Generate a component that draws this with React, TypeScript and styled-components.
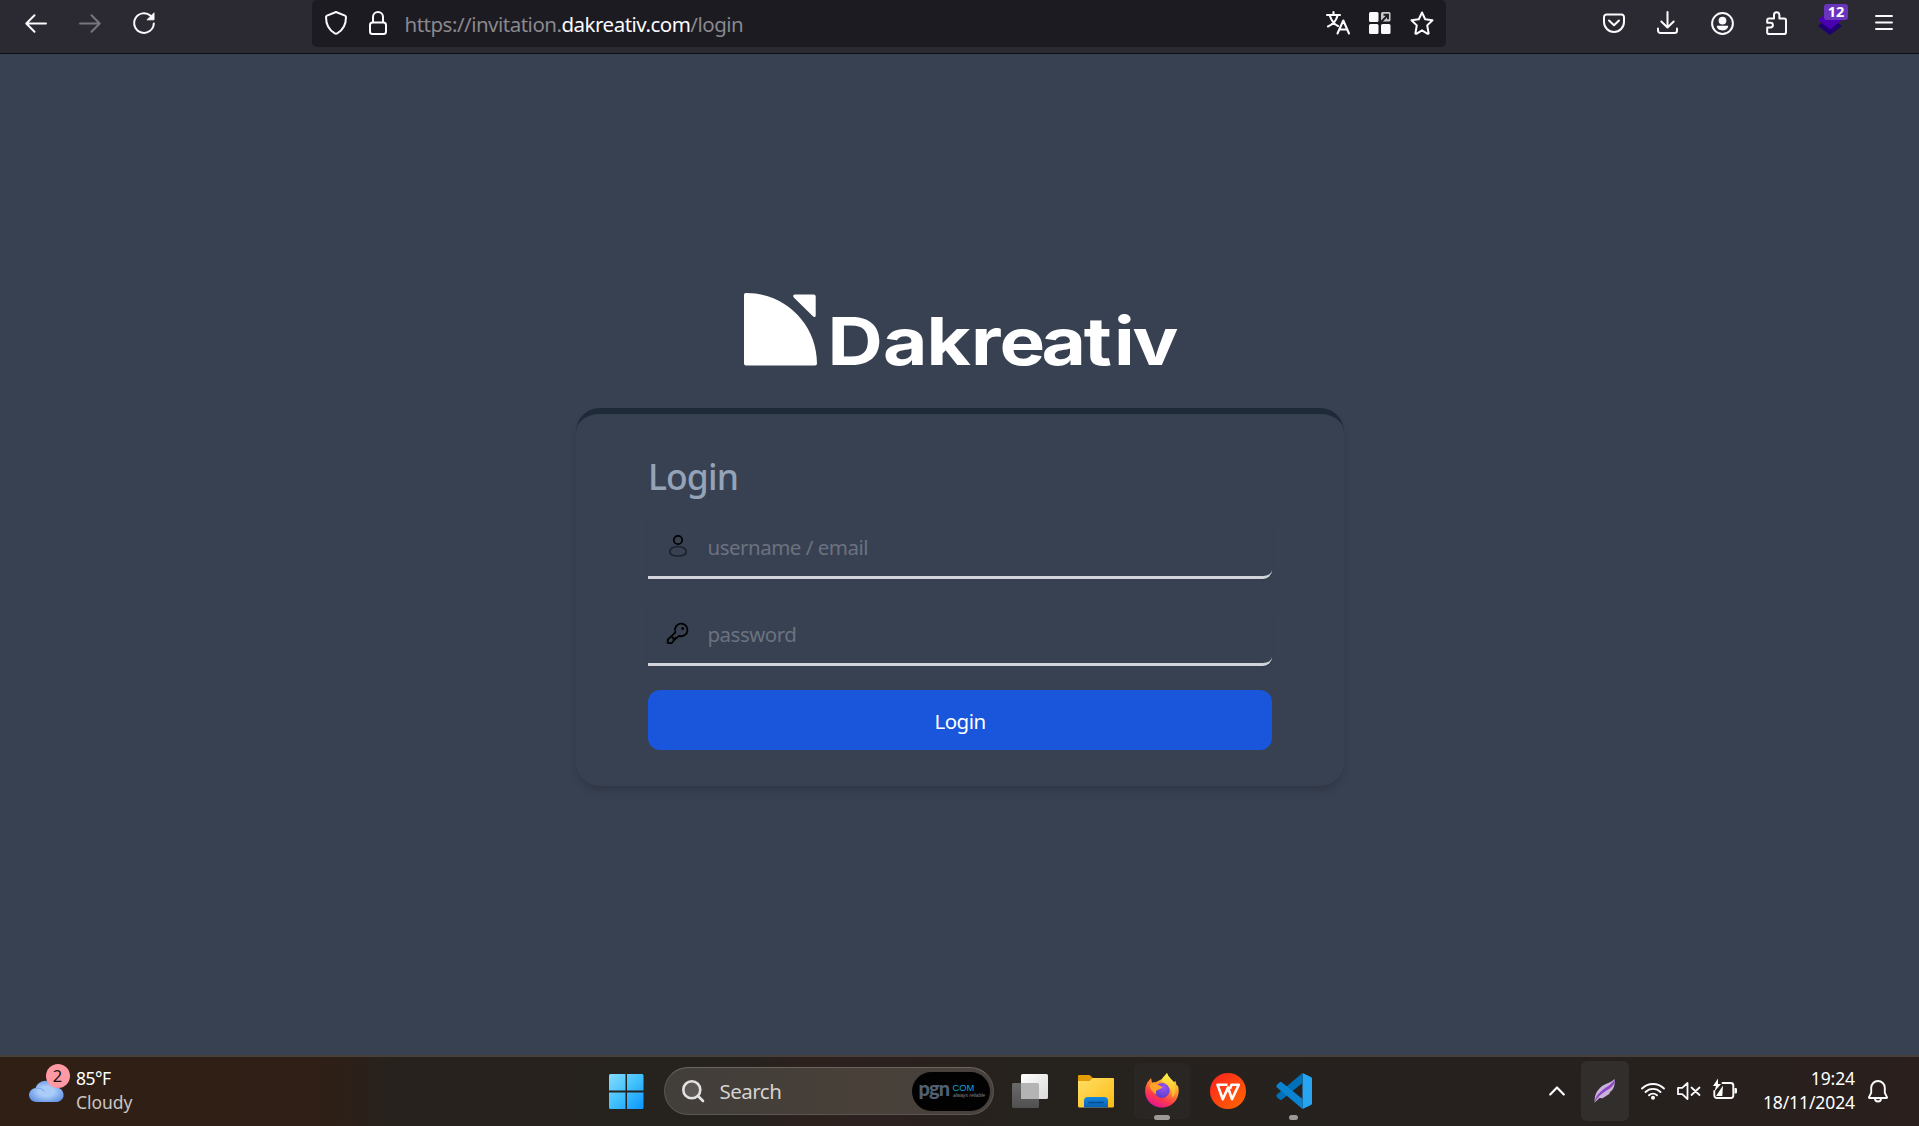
import React from "react";
import styled, { createGlobalStyle } from "styled-components";

const GlobalStyle = createGlobalStyle`
  *, *::before, *::after { box-sizing: border-box; }
  body { margin: 0; background: #374151; overflow: hidden; }
  svg { display: block; flex: none; overflow: visible; }
`;

const sans = `"Noto Sans", "Open Sans", sans-serif`;

const Screen = styled.div`
  width: 1919px;
  height: 1126px;
  display: flex;
  flex-direction: column;
  background: #384152;
  font-family: ${sans};
`;

/* ---------- browser toolbar ---------- */

const Toolbar = styled.header`
  height: 54px;
  flex: none;
  display: flex;
  align-items: flex-start;
  background: #2b2a33;
  border-bottom: 1px solid #0e0d12;
`;

const Slot = styled.span<{ $gap: number; $top?: number }>`
  display: block;
  flex: none;
  margin-left: ${(p) => p.$gap}px;
  margin-top: ${(p) => p.$top ?? 0}px;
`;

const AddressBar = styled.div`
  width: 1134px;
  height: 47px;
  margin-left: 157px;
  flex: none;
  display: flex;
  align-items: flex-start;
  background: #1c1b22;
  border-radius: 5px;
`;

const Url = styled.div`
  width: 938.5px;
  flex: none;
  padding-left: 17.5px;
  line-height: 49px;
  font-size: 20.5px;
  letter-spacing: -0.5px;
  white-space: nowrap;
  color: #89888d;
`;

const Domain = styled.span`
  color: #fbfbfe;
`;

const Extension = styled.div`
  position: relative;
  margin: 13px 0 0 31px;
  width: 24px;
  height: 22px;
  flex: none;
`;

const ExtensionBadge = styled.span`
  position: absolute;
  left: 6px;
  top: -9px;
  width: 24px;
  height: 16px;
  border-radius: 3px;
  background: #6a35bd;
  color: #fff;
  font: 700 14.5px/15px ${sans};
  text-align: center;
`;

/* ---------- login page ---------- */

const Page = styled.main`
  flex: 1;
  display: flex;
  flex-direction: column;
  align-items: center;
  padding-top: 238px;
`;

const Brand = styled.div`
  width: 436px;
  height: 116px;
`;

const Card = styled.form`
  width: 768px;
  height: 378px;
  padding: 42px 72px 0;
  border-top: 6px solid #1f2a39;
  border-radius: 24px;
  box-shadow: 0 6px 9px -1px rgba(0, 0, 0, 0.1), 0 3px 6px -1px rgba(0, 0, 0, 0.06);
`;

const Title = styled.h1`
  margin: 0;
  height: 60px;
  padding-left: 0.5px;
  line-height: 40px;
  font-size: 35.5px;
  font-weight: 550;
  letter-spacing: -0.9px;
  color: #94a3b8;
`;

const Field = styled.label`
  height: 63px;
  margin-bottom: 24px;
  display: flex;
  align-items: center;
  padding-left: 18px;
  border-bottom: 3px solid #d1d5db;
  border-radius: 0 9px 9px 0;
  box-shadow: 0 1px 3px rgba(0, 0, 0, 0.05);
`;

const Input = styled.input`
  flex: 1;
  margin-left: 18px;
  padding: 1px 0 0;
  border: 0;
  outline: 0;
  background: none;
  font: 400 20.5px/30px ${sans};
  letter-spacing: -0.5px;
  &::placeholder {
    color: #6b7280;
    opacity: 1;
  }
`;

const Submit = styled.button`
  width: 100%;
  height: 60px;
  border: 0;
  border-radius: 12px;
  padding: 1px 0 0 1px;
  background: #1a56db;
  color: #fff;
  font: 400 20.5px/30px ${sans};
  letter-spacing: -0.5px;
`;

/* ---------- taskbar ---------- */

const Taskbar = styled.footer`
  height: 71px;
  flex: none;
  display: flex;
  align-items: flex-start;
  border-top: 2px solid #47403a;
  background: linear-gradient(90deg, #301f15 0, #2f1f16 320px, #27221e 400px, #26221e 740px, #2d211e 810px, #2b211e 900px, #26221e 1010px, #26211e 1600px, #2a1f1d 1919px);
`;

const Weather = styled.div`
  position: relative;
  margin: 22px 0 0 29px;
  width: 36px;
`;

const Alert = styled.span`
  position: absolute;
  left: 16.5px;
  top: -15px;
  width: 24px;
  height: 24px;
  border-radius: 50%;
  background: #ff99a4;
  color: #1a1213;
  font-size: 16.5px;
  line-height: 23px;
  text-align: center;
`;

const Lines = styled.div<{ $width: number; $left: number; $right?: boolean }>`
  width: ${(p) => p.$width}px;
  margin: 9px 0 0 ${(p) => p.$left}px;
  flex: none;
  font-size: 17.5px;
  line-height: 24px;
  letter-spacing: ${(p) => (p.$right ? "-0.1px" : "-0.5px")};
  white-space: nowrap;
  color: #fff;
  text-align: ${(p) => (p.$right ? "right" : "left")};
`;

const Muted = styled.div`
  color: #cac6c3;
  letter-spacing: -0.05px;
`;

const SearchBox = styled.div`
  width: 330px;
  height: 48px;
  margin: 10px 0 0 20px;
  flex: none;
  display: flex;
  align-items: center;
  padding: 0 3px 0 17px;
  border: 1.5px solid #5c5652;
  border-top-color: #6b6561;
  border-radius: 24px;
  background: linear-gradient(90deg, #423e3a, #484039 60%, #47403c);
`;

const SearchLabel = styled.span`
  flex: 1;
  padding: 0 0 0 16px;
  font-size: 20.5px;
  letter-spacing: -0.5px;
  color: #d5d2d0;
`;

const Sponsor = styled.div`
  width: 78px;
  height: 39px;
  border-radius: 20px;
  background: #020202;
`;

const Tile = styled.div<{ $w: number; $h: number; $gap: number; $top: number; $faint?: boolean }>`
  width: ${(p) => p.$w}px;
  height: ${(p) => p.$h}px;
  margin: ${(p) => p.$top}px 0 0 ${(p) => p.$gap}px;
  flex: none;
  display: flex;
  flex-direction: column;
  align-items: center;
  border-radius: 6px;
  background: ${(p) => (p.$faint ? "#2a2623" : "#322e2c")};
`;

const AppEntry = styled.div<{ $gap: number }>`
  width: 36px;
  margin: 16px 0 0 ${(p) => p.$gap}px;
  flex: none;
  display: flex;
  flex-direction: column;
  align-items: center;
`;

const Indicator = styled.span<{ $w: number; $mt: number }>`
  width: ${(p) => p.$w}px;
  height: 5px;
  margin-top: ${(p) => p.$mt}px;
  flex: none;
  border-radius: 3px;
  background: #9c9a98;
`;

type LineProps = { w: number; h: number; sw?: number; color?: string; children: React.ReactNode };

/** Stroked glyph drawn on a canvas of its own pixel size. */
const Line = ({ w, h, sw = 2, color = "#fbfbfe", children }: LineProps) => (
  <svg width={w} height={h} viewBox={`0 0 ${w} ${h}`} fill="none" stroke={color} strokeWidth={sw} strokeLinecap="round" strokeLinejoin="round">
    {children}
  </svg>
);

const BrowserToolbar = () => (
  <Toolbar>
    <Slot $gap={25} $top={14}>
      <Line w={22} h={19}><path d="M21 9.5H2M9.5 1.2 1.3 9.5l8.2 8.2" /></Line>
    </Slot>
    <Slot $gap={32} $top={14}>
      <Line w={22} h={19} color="#77767c"><path d="M1 9.5h19M12.5 1.2l8.2 8.3-8.2 8.2" /></Line>
    </Slot>
    <Slot $gap={32} $top={12}>
      <Line w={22} h={22}>
        <path d="M20.8 11.5A9.8 9.8 0 1 1 17.6 3.8" />
        <path d="M21 1.2v6.6h-6.6z" fill="#fbfbfe" strokeWidth={1} />
      </Line>
    </Slot>
    <AddressBar>
      <Slot $gap={13} $top={11}>
        <Line w={22} h={24}><path d="M11 1 20 4.6c.7.3 1 .8 1 1.5 0 7.4-2.8 13-8.8 16.300a2.500 2.500 0 0 1-2.400 0C3.800 19.100 1 13.500 1 6.100c0-.7.3-1.200 1-1.500z" /></Line>
      </Slot>
      <Slot $gap={22} $top={11}>
        <Line w={18} h={24}><rect x="1" y="11.5" width="16" height="11.5" rx="2.5" /><path d="M4 11V6a5 5 0 0 1 10 0v5" /></Line>
      </Slot>
      <Url>https://invitation.<Domain>dakreativ.com</Domain>/login</Url>
      <Slot $gap={0} $top={11}>
        <Line w={24} h={23}>
          <path d="M1 4h13M7.500 1v3M11.500 4.500C10.500 9 6.500 13.500 2 15.500M4 5c1.500 4.500 4.500 8.500 8 10M11.500 22.500 17.300 9.500l5.700 13M13.500 18.500h7.800" strokeWidth={2.1} />
        </Line>
      </Slot>
      <Slot $gap={19} $top={12}>
        <svg width="22" height="22" viewBox="0 0 22 22">
          <g fill="#fbfbfe"><rect width="9.5" height="10" rx="1.5" /><rect y="12" width="9.5" height="10" rx="1.5" /><rect x="12" y="12" width="9.5" height="10" rx="1.5" /></g>
          <path d="M12 1.500A1.500 1.500 0 0 1 13.500 0H20a1.500 1.500 0 0 1 1.500 1.500V8A1.500 1.500 0 0 1 20 9.500h-6.500A1.500 1.500 0 0 1 12 8z" fill="#c8c8c8" />
          <path d="M12.500 9.500 18.500 3.300M14.500 2.800h4.500v4.500" stroke="#1c1b22" strokeWidth="1.9" fill="none" />
        </svg>
      </Slot>
      <Slot $gap={19} $top={11}>
        <Line w={24} h={24}><path d="m12 1.500 3.200 6.700 7.300 1-5.300 5.200 1.400 7.800c.1.500-.4.800-.9.600L12 19.300l-5.700 3.500c-.5.200-1-.1-.9-.6l1.400-7.800L1.500 9.200l7.300-1z" /></Line>
      </Slot>
    </AddressBar>
    <Slot $gap={157} $top={13}>
      <Line w={22} h={20}><path d="M3.500 1.500h15A2.500 2.500 0 0 1 21 4v5a10 10 0 0 1-20 0V4a2.500 2.500 0 0 1 2.500-2.500zM6 7.500l5 4.800 5-4.800" /></Line>
    </Slot>
    <Slot $gap={32} $top={11}>
      <Line w={21} h={23}><path d="M10.500 1v15M4.300 10.500l6.200 6 6.200-6M1 17.500v2A2.500 2.500 0 0 0 3.500 22h14a2.500 2.500 0 0 0 2.500-2.500v-2" /></Line>
    </Slot>
    <Slot $gap={33} $top={12}>
      <Line w={23} h={23}>
        <circle cx="11.5" cy="11.5" r="10.4" />
        <circle cx="11.5" cy="8.6" r="3.9" fill="#fbfbfe" stroke="none" />
        <path d="M5.800 13.800h11.400c0 3-2.600 4.700-5.700 4.700s-5.700-1.700-5.700-4.700z" fill="#fbfbfe" stroke="none" />
      </Line>
    </Slot>
    <Slot $gap={32} $top={11}>
      <Line w={21} h={24}><path d="M3 7.500h5V4a2.700 2.700 0 0 1 5.400 0v3.500h4.800A1.800 1.800 0 0 1 20 9.300v11.900a1.800 1.800 0 0 1-1.800 1.800H3a1.800 1.800 0 0 1-1.800-1.800v-4.700h3.300a2.400 2.400 0 0 0 0-4.800H1.200V9.300A1.800 1.800 0 0 1 3 7.500z" /></Line>
    </Slot>
    <Extension>
      <svg width="24" height="22" viewBox="0 0 24 22">
        <path d="M0 13 12 3l12 10-12 9z" fill="#1e0070" />
        <path d="M0 7 12-3 24 7 12 16.500z" fill="#4b00b0" />
      </svg>
      <ExtensionBadge>12</ExtensionBadge>
    </Extension>
    <Slot $gap={33} $top={15}>
      <Line w={18} h={15} sw={1.9}><path d="M1 1h16M1 7.500h16M1 14h16" /></Line>
    </Slot>
  </Toolbar>
);

const BrandLogo = () => (
  <Brand>
    <svg width="436" height="76" viewBox="0 0 436 76">
      <path d="M4.500 1C43.500 1 75 32.500 75 71.500a2 2 0 0 1-2 2H4a2 2 0 0 1-2-2V3a2 2 0 0 1 2.500-2z" fill="#fff" />
      <path d="M53 2.600h18.700a2 2 0 0 1 2 2v18.600c0 2-1.500 2.400-2.800 1.100L51.800 5.400c-1.200-1.200-.6-2.800 1.200-2.800z" fill="#fff" />
      <text
        transform="scale(1.16 1)"
        x="73.8 121.6 159 197.4 221.9 258.2 294.6 320.6 336.6"
        y="73"
        fontFamily="Inter, sans-serif"
        fontWeight="700"
        fontSize="66"
        fill="#fff"
      >
        Dakreativ
      </text>
    </svg>
  </Brand>
);

const LoginPage = () => (
  <Page>
    <BrandLogo />
    <Card onSubmit={(e) => e.preventDefault()}>
      <Title>Login</Title>
      <Field>
        <Line w={24} h={24} color="#000" sw={1.7}>
          <circle cx="12" cy="6" r="4.2" />
          <path d="M12 12.500c5 0 8.200 2.300 8.200 5s-2.700 4.500-8.200 4.500-8.200-1.800-8.200-4.500 3.200-5 8.200-5z" stroke="#1b222c" />
        </Line>
        <Input placeholder="username / email" aria-label="username or email" />
      </Field>
      <Field>
        <Line w={24} h={24} color="#000" sw={1.8}>
          <path d="M9.400 11.300A6.300 6.300 0 1 1 13 14.800l-2.200 2-1.200-.2-.3 1.700-1.600-.1-.1 1.800-1.800 2-3.300.2c-.7 0-.9-.5-.8-1.200l.1-2.400zM6.500 16.500l2 2" />
          <circle cx="16.6" cy="7.6" r="1.5" fill="#000" stroke="none" />
        </Line>
        <Input type="password" placeholder="password" aria-label="password" />
      </Field>
      <Submit>Login</Submit>
    </Card>
  </Page>
);

const FirefoxIcon = () => (
  <svg width="34" height="35" viewBox="0 0 34 35">
    <defs>
      <linearGradient id="fxBody" x1=".8" y1="0" x2=".3" y2="1"><stop offset="0" stopColor="#fff044" /><stop offset=".4" stopColor="#ff9a2a" /><stop offset=".72" stopColor="#ff3a4a" /><stop offset="1" stopColor="#e0129c" /></linearGradient>
      <radialGradient id="fxGlobe" cx=".6" cy=".3" r=".8"><stop offset="0" stopColor="#9a55f5" /><stop offset="1" stopColor="#523ac4" /></radialGradient>
      <linearGradient id="fxFlame" x1="0" y1="0" x2="0" y2="1"><stop offset="0" stopColor="#fff34a" /><stop offset="1" stopColor="#ffae2a" /></linearGradient>
    </defs>
    <path d="M2.300 9.500 6 5l1 4.500 4-.5 6-3C18.500 3.500 21 1.500 22 0c1 4 4 6 7 9l1.500-1 1 4 1.500 1c3 11-4.500 21.500-16 21.500S-2 24.500.7 13.500z" fill="url(#fxBody)" />
    <path d="M16.500 8c.5-3.500 4.500-6 5.500-8 1 4 5 6 7 10 3 6 1.500 12-2 14.500 0-7.500-3-12.500-10.500-16.500z" fill="url(#fxFlame)" />
    <circle cx="17" cy="17.5" r="7.6" fill="url(#fxGlobe)" />
    <path d="M4.500 12c3-3.500 6.500-2.500 8-.5l5 2.500c-.5 2-4 2-5 3-2 .5-2 2.500-1 4.500-4-2-6.500-5.500-7-9.500z" fill="#ffa22a" />
  </svg>
);

const TaskbarRow = () => (
  <Taskbar>
    <Weather>
      <svg width="36" height="23" viewBox="0 0 36 23">
        <defs><radialGradient id="cloud" cx=".5" cy=".5" r=".65"><stop offset=".35" stopColor="#a9cdf8" /><stop offset="1" stopColor="#5585df" /></radialGradient></defs>
        <path d="M7.500 23a7 7 0 0 1-1-14A11 11 0 0 1 27 8.500 7.300 7.300 0 0 1 28.500 23z" fill="url(#cloud)" />
        <path d="M6.500 9.500c4-.8 7 .2 9 3" stroke="#7ba9ee" strokeWidth="1.2" fill="none" />
      </svg>
      <Alert>2</Alert>
    </Weather>
    <Lines $width={80} $left={11}>
      85°F
      <Muted>Cloudy</Muted>
    </Lines>

    <Slot $gap={452.5} $top={17}>
      <svg width="35" height="35" viewBox="0 0 35 35">
        <defs><linearGradient id="win" gradientUnits="userSpaceOnUse" x1="0" y1="0" x2="35" y2="35"><stop offset="0" stopColor="#86dcff" /><stop offset=".5" stopColor="#40c0fc" /><stop offset="1" stopColor="#0a94ff" /></linearGradient></defs>
        <path d="M1.500 0h15v16.500H0v-15A1.500 1.500 0 0 1 1.500 0zM18 0h15a1.500 1.500 0 0 1 1.500 1.500v15H18zM0 18.500h16.500V35h-15A1.500 1.500 0 0 1 0 33.500zM18 18.500h16.500v15A1.500 1.500 0 0 1 33 35H18z" fill="url(#win)" />
      </svg>
    </Slot>

    <SearchBox>
      <Line w={22} h={22} sw={2.6} color="#e4e2e1"><circle cx="9.8" cy="9.8" r="8.5" fill="#5c5855" /><path d="m16 16 5 5" /></Line>
      <SearchLabel>Search</SearchLabel>
      <Sponsor>
        <svg width="78" height="39" viewBox="0 0 78 39">
          <text x="6.5" y="24" letterSpacing="-.9" fontFamily="Lato, sans-serif" fontWeight="900" fontSize="20" fill="#515f72">pgn</text>
          <text x="40.5" y="18.5" fontFamily="Liberation Sans, sans-serif" fontSize="9.4" fill="#08a3de">COM</text>
          <text x="41" y="24.8" fontFamily="Liberation Sans, sans-serif" fontStyle="italic" fontSize="4.9" fill="#82858a">always reliable</text>
        </svg>
      </Sponsor>
    </SearchBox>

    <AppEntry $gap={18}>
      <svg width="36" height="36" viewBox="0 0 36 36">
        <defs><linearGradient id="tv" x1="0" y1="0" x2="1" y2="1"><stop offset="0" stopColor="#fff" /><stop offset="1" stopColor="#d9d9d9" /></linearGradient><linearGradient id="tvb" x1="0" y1="0" x2="0" y2="1"><stop offset="0" stopColor="#6a6a6a" /><stop offset="1" stopColor="#505050" /></linearGradient></defs>
        <rect x="0" y="10" width="27" height="25" rx="1.5" fill="url(#tvb)" />
        <rect x="9" y="1" width="27" height="25" rx="1.5" fill="url(#tv)" />
        <path d="M9 10h16.500A1.500 1.500 0 0 1 27 11.500V26H9z" fill="#b4b4b4" />
      </svg>
    </AppEntry>
    <AppEntry $gap={30}>
      <svg width="36" height="36" viewBox="0 0 36 36">
        <defs><linearGradient id="folder" x1="0" y1="0" x2="1" y2="1"><stop offset="0" stopColor="#ffdf67" /><stop offset="1" stopColor="#fdbb13" /></linearGradient><linearGradient id="tray" x1="0" y1="0" x2="0" y2="1"><stop offset="0" stopColor="#1287da" /><stop offset="1" stopColor="#0a5fb4" /></linearGradient></defs>
        <path d="M0 3a1 1 0 0 1 1-1h10.500L15 5v5H0z" fill="#e29c05" />
        <path d="M0 8h11.500L15 5h20a1 1 0 0 1 1 1v27a1.500 1.500 0 0 1-1.500 1.500h-33A1.500 1.500 0 0 1 0 33z" fill="url(#folder)" />
        <path d="M6 34.500V28a4 4 0 0 1 4-4h16a4 4 0 0 1 4 4v6.500z" fill="url(#tray)" />
        <path d="M11 29.500h14" stroke="#074c8f" strokeWidth="1.6" strokeLinecap="round" />
      </svg>
    </AppEntry>
    <Tile $w={56} $h={56} $gap={20} $top={6} $faint>
      <Slot $gap={0} $top={10}><FirefoxIcon /></Slot>
      <Indicator $w={16} $mt={7} />
    </Tile>
    <AppEntry $gap={20}>
      <svg width="36" height="36" viewBox="0 0 36 36">
        <defs><linearGradient id="wps" x1="0" y1="0" x2="1" y2="1"><stop offset="0" stopColor="#ff1f1f" /><stop offset="1" stopColor="#ff6a00" /></linearGradient></defs>
        <circle cx="18" cy="18" r="18" fill="url(#wps)" />
        <path d="M17.500 11.700H7.500l5.300 14.500L18 14.500l4 11.700 6.800-14.500h-7.300l-1.500 4" fill="none" stroke="#fff" strokeWidth="2.6" strokeLinejoin="round" />
      </svg>
    </AppEntry>
    <AppEntry $gap={30}>
      <svg width="36" height="36" viewBox="0 0 36 36">
        <path d="M26.500 0 35 4a1.800 1.800 0 0 1 1 1.700v24.600a1.800 1.800 0 0 1-1 1.700l-8.500 4z" fill="#27a4f2" />
        <path d="M26.500 0v10L6 26.500c-.8.600-1.800.6-2.500 0L1 24.200c-.8-.8-.8-1.900 0-2.600z" fill="#0070b8" />
        <path d="M26.500 36V26L6 9.500c-.8-.6-1.800-.6-2.500 0L1 11.800c-.8.800-.8 1.900 0 2.600z" fill="#0a84d0" />
      </svg>
      <Indicator $w={9} $mt={6} />
    </AppEntry>

    <Slot $gap={237} $top={29}><Line w={16} h={10} sw={2.2}><path d="m1.200 8.500 6.800-7 6.800 7" /></Line></Slot>
    <Tile $w={48} $h={60} $gap={16} $top={4}>
      <Slot $gap={0} $top={18}>
        <svg width="22" height="24" viewBox="0 0 22 24">
          <path d="M.8 23.500C0 16 3 11.500 7.500 7.500 11 4.500 17 4 20.500 0c.7 5-.3 9.500-3.500 12.500l-1 .2-.5 2-3 2-4 2.500-3-.2z" fill="#c8b2dc" />
          <path d="M.6 24C1 17.500 5 14 8.500 11 13 7.500 18 5.500 20.800 0c.2 4-1.500 7-5 9.500C10 13 4 16.500.6 24z" fill="#8e45c4" />
        </svg>
      </Slot>
    </Tile>
    <Slot $gap={12} $top={25}>
      <Line w={24} h={18} sw={1.9}><path d="M1 6.500a15.600 15.600 0 0 1 22 0M4.500 10a10.600 10.600 0 0 1 15 0M8 13.300a5.700 5.700 0 0 1 8 0" /><circle cx="12" cy="15.8" r="2" fill="#fff" stroke="none" /></Line>
    </Slot>
    <Slot $gap={12} $top={25}>
      <Line w={24} h={18} sw={1.8}><path d="M1 5.800h4.200L10.500 1v16l-5.300-4.800H1zM14.500 5.500l8 7.500M22.500 5.500l-8 7.500" /></Line>
    </Slot>
    <Slot $gap={12} $top={22}>
      <Line w={25} h={21} sw={1.9}>
        <path d="M9.500 4h8.300a2.500 2.500 0 0 1 2.500 2.500v10a2.500 2.500 0 0 1-2.500 2.500H3.800a2.500 2.500 0 0 1-2.500-2.500V12" />
        <path d="M21.500 9h1.200a1.300 1.300 0 0 1 1.300 1.300v2.900a1.300 1.300 0 0 1-1.300 1.300h-1.200z" fill="#fff" stroke="none" />
        <path d="M10 6.500 9.300 17H3l1-1.500z" fill="#fff" stroke="none" />
        <path d="m5-.500-5 7.500h3L1.500 12.500 8 5H5z" fill="#fff" stroke="none" />
      </Line>
    </Slot>
    <Lines $width={100} $left={17.5} $right>
      19:24<br />18/11/2024
    </Lines>
    <Slot $gap={13} $top={23}>
      <Line w={20} h={23} sw={1.9}><path d="M10 1a6.800 6.800 0 0 0-6.800 6.800v5L1 17.200c-.2.500 0 .8.500.8h17c.5 0 .7-.3.500-.8l-2.200-4.400v-5A6.800 6.800 0 0 0 10 1zM7 18.500a3 3 0 0 0 6 0" /></Line>
    </Slot>
  </Taskbar>
);

export default function App() {
  return (
    <Screen>
      <GlobalStyle />
      <BrowserToolbar />
      <LoginPage />
      <TaskbarRow />
    </Screen>
  );
}
